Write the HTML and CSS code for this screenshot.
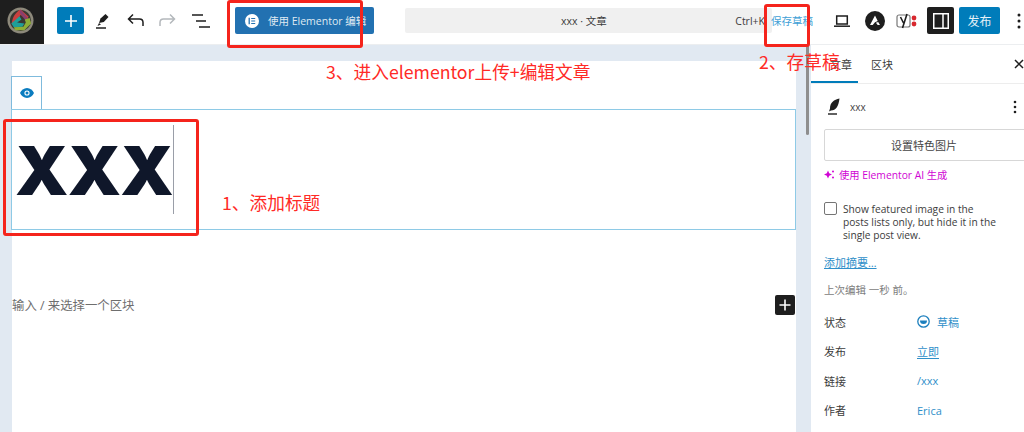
FILE: index.html
```html
<!DOCTYPE html>
<html lang="zh">
<head>
<meta charset="utf-8">
<title>xxx</title>
<link rel="stylesheet" href="styles.css">
</head>
<body>
<header class="topbar">
  <div class="logo">
    <svg width="27" height="27" viewBox="0 0 28 28">
      <circle cx="14" cy="14" r="13.500" fill="#8d897b"/>
      <circle cx="14" cy="14" r="11" fill="#3a3833"/>
      <path d="M14 2.500L22.500 10 20 13 14 8 9.500 17 5 18C5 12 8 6 14 2.500z" fill="#c9403f"/>
      <path d="M14 2.500L24.500 15 21 16 13 6z" fill="#8a3f6e"/>
      <path d="M4.500 17L13 9.500 15 13 10.500 16 18 17 16 20.500 7 21z" fill="#1f9f98"/>
      <path d="M23.500 11.500L25 17 18 24H8.500L7 21 17 20.500 19.500 16 18.500 13z" fill="#8eae36"/>
    </svg>
  </div>
  <div class="tools">
    <button class="btn-add" aria-label="add"><svg width="14" height="14" viewBox="0 0 14 14"><path d="M7 1v12M1 7h12" stroke="#fff" stroke-width="1.600"/></svg></button>
    <svg class="tool" width="20" height="20" viewBox="0 0 20 20"><path d="M7 12l1.500-4.500L13.500 3l3 3-4.700 5z" fill="#1e1e1e"/><path d="M4 17h10" stroke="#1e1e1e" stroke-width="1.500"/><path d="M7 12l-1.500 3 3.500-1.500z" fill="#1e1e1e"/></svg>
    <svg class="tool" width="20" height="20" viewBox="0 0 20 20"><path d="M18 15v-3.500c0-2-1.500-3.500-3.500-3.500H4M8 3.500L3.500 8 8 12.500" fill="none" stroke="#1e1e1e" stroke-width="1.500"/></svg>
    <svg class="tool" width="20" height="20" viewBox="0 0 20 20"><path d="M2 15v-3.500C2 9.500 3.500 8 5.500 8H16M12 3.500L16.500 8 12 12.500" fill="none" stroke="#b4b8bc" stroke-width="1.500"/></svg>
    <svg class="tool" width="20" height="20" viewBox="0 0 20 20"><path d="M1 4h11M5 10h10M8 16h11" fill="none" stroke="#1e1e1e" stroke-width="1.600"/></svg>
  </div>
  <button class="btn-elementor">
    <span class="e-icon"><svg width="10" height="10" viewBox="0 0 10 10"><path d="M1.500 1v8" stroke="#2271b1" stroke-width="1.600"/><path d="M4 1.800h5M4 5h5M4 8.200h5" stroke="#2271b1" stroke-width="1.400"/></svg></span>
    使用 Elementor 编辑
  </button>
  <div class="search">
    <span class="search-title">xxx · 文章</span>
    <span class="search-key">Ctrl+K</span>
  </div>
  <a class="save">保存草稿</a>
  <div class="actions">
    <svg width="20" height="20" viewBox="0 0 20 20"><path d="M4.700 5h10.600v8H4.700z" fill="none" stroke="#1e1e1e" stroke-width="1.500"/><path d="M2 15.200h16" stroke="#1e1e1e" stroke-width="1.500"/></svg>
    <svg width="20" height="20" viewBox="0 0 22 22"><circle cx="11" cy="11" r="11" fill="#1e1e1e"/><path d="M5.500 15.500L11 5l3 6-3 1.500-2.500 3zM12 13l2.500-1 2 3.500h-2.500z" fill="#fff"/></svg>
    <svg class="yoast" width="24" height="20" viewBox="0 0 24 20"><rect x="1" y="4" width="13" height="12" rx="2" fill="#fff" stroke="#777" stroke-width="1.200"/><path d="M4.500 6l3 6M11 3l-4.500 14" fill="none" stroke="#1e1e1e" stroke-width="1.600"/><circle cx="18" cy="7" r="2.400" fill="#d8282f"/><circle cx="18" cy="13" r="2.400" fill="#d8282f"/></svg>
    <button class="btn-panel" aria-label="panel"><svg width="18" height="18" viewBox="0 0 18 18"><path d="M1.750 1.750h14.500v14.500H1.750zM11 2v14" fill="none" stroke="#fff" stroke-width="1.500"/></svg></button>
    <button class="btn-publish">发布</button>
    <svg width="4" height="16" viewBox="0 0 4 16"><circle cx="2" cy="2" r="1.500" fill="#1e1e1e"/><circle cx="2" cy="8" r="1.500" fill="#1e1e1e"/><circle cx="2" cy="14" r="1.500" fill="#1e1e1e"/></svg>
  </div>
</header>

<div class="main">
  <main class="canvas">
    <div class="sheet">
      <div class="block-tab"><svg width="14" height="10" viewBox="0 0 14 10"><path d="M7 0C3.800 0 1.300 2.200 0 5c1.300 2.800 3.800 5 7 5s5.700-2.200 7-5c-1.300-2.800-3.800-5-7-5z" fill="#0b7cbf"/><circle cx="7" cy="5" r="2.600" fill="#fff"/><circle cx="7" cy="5" r="1.500" fill="#0b7cbf"/></svg></div>
      <div class="title-box"><h1 class="title">XXX</h1><span class="caret"></span></div>
      <div class="placeholder-row">
        <span class="placeholder">输入 / 来选择一个区块</span>
        <button class="btn-insert" aria-label="insert"><svg width="12" height="12" viewBox="0 0 12 12"><path d="M6 .5v11M.5 6h11" stroke="#fff" stroke-width="1.600"/></svg></button>
      </div>
    </div>
    <div class="scrollbar"></div>
  </main>
  <aside class="sidebar">
    <div class="tabs">
      <span class="tab active">文章</span>
      <span class="tab">区块</span>
      <svg class="close" width="12" height="12" viewBox="0 0 12 12"><path d="M2 2l8 8M10 2l-8 8" stroke="#1e1e1e" stroke-width="1.500"/></svg>
    </div>
    <div class="panel">
      <div class="post-head">
        <svg width="14" height="18" viewBox="0 0 14 17"><path d="M12.500 0C7 1 3 4 3 10l-1 3 2-1c5 0 7.500-4 8.500-12z" fill="#1e1e1e"/><path d="M1 15.500h9" stroke="#1e1e1e" stroke-width="1.400"/></svg>
        <span class="post-name">xxx</span>
        <svg class="dots" width="4" height="14" viewBox="0 0 4 14"><circle cx="2" cy="2" r="1.300" fill="#1e1e1e"/><circle cx="2" cy="7" r="1.300" fill="#1e1e1e"/><circle cx="2" cy="12" r="1.300" fill="#1e1e1e"/></svg>
      </div>
      <button class="btn-feature">设置特色图片</button>
      <div class="ai"><svg width="11" height="11" viewBox="0 0 11 11"><path d="M4 1.500l1.200 2.800L8 5.500 5.200 6.700 4 9.500 2.800 6.700 0 5.500l2.800-1.200z" fill="#d004d4"/><circle cx="9" cy="2.500" r="1" fill="#d004d4"/><circle cx="9" cy="8.500" r="1" fill="#d004d4"/></svg>使用 Elementor AI 生成</div>
      <label class="check">
        <span class="box"></span>
        <span class="check-text">Show featured image in the posts lists only, but hide it in the single post view.</span>
      </label>
      <a class="excerpt">添加摘要…</a>
      <p class="edited">上次编辑 一秒 前。</p>
      <dl class="meta">
        <div class="row"><dt>状态</dt><dd><svg width="13" height="13" viewBox="0 0 13 13"><circle cx="6.500" cy="6.500" r="5.700" fill="none" stroke="#1c7fbd" stroke-width="1.300"/><path d="M3 5.500h7a3.500 3.500 0 0 1-7 0z" fill="#1c7fbd"/></svg><span class="draft">草稿</span></dd></div>
        <div class="row"><dt>发布</dt><dd class="u">立即</dd></div>
        <div class="row"><dt>链接</dt><dd>/xxx</dd></div>
        <div class="row"><dt>作者</dt><dd>Erica</dd></div>
      </dl>
    </div>
  </aside>
</div>

<div class="anno-box box-1"></div>
<div class="anno-box box-2"></div>
<div class="anno-box box-3"></div>
<div class="anno note-1">1、添加标题</div>
<div class="anno note-2">2、存草稿</div>
<div class="anno note-3">3、进入elementor上传+编辑文章</div>
</body>
</html>
```
FILE: styles.css
```css
* { box-sizing: border-box; }
html, body { margin: 0; height: 432px; overflow: hidden; }
body {
  position: relative;
  width: 1024px;
  background: #fff;
  color: #1e1e1e;
  font-family: "Open Sans", "Noto Sans CJK SC", sans-serif;
  font-size: 12px;
  display: flex;
  flex-direction: column;
}
button { border: 0; padding: 0; font: inherit; cursor: pointer; }

.topbar {
  height: 45px;
  flex: none;
  display: flex;
  align-items: center;
  background: #fff;
  border-bottom: 1px solid #eceef0;
  padding-bottom: 3px;
}
.logo {
  width: 44px;
  align-self: stretch;
  margin-bottom: -3px;
  background: #1e1e1e;
  display: flex;
  align-items: center;
  padding: 0 0 3px 7px;
  flex: none;
}
.tools { display: flex; align-items: center; margin-left: 13px; width: 178px; flex: none; }
.btn-add {
  width: 27px;
  height: 27px;
  border-radius: 2px;
  background: #007cba;
  display: flex;
  align-items: center;
  justify-content: center;
  margin-right: 8px;
}
.tool { margin-right: 13px; }
.btn-elementor {
  width: 139px;
  height: 27px;
  flex: none;
  display: flex;
  align-items: center;
  gap: 9px;
  padding-left: 10px;
  border-radius: 2px;
  background: #2271b1;
  color: #dfe9f2;
  font-size: 10.500px;
  white-space: nowrap;
}
.e-icon {
  width: 14px;
  height: 14px;
  border-radius: 50%;
  background: #fff;
  display: flex;
  align-items: center;
  justify-content: center;
}
.e-icon svg { width: 8px; height: 8px; }
.search {
  margin-left: 31px;
  width: 367px;
  height: 25px;
  flex: none;
  border-radius: 2px;
  background: #f0f0f0;
  display: flex;
  align-items: center;
  padding-left: 156px;
  font-size: 10.500px;
  color: #3c3c3c;
}
.search-key { margin-left: auto; margin-right: 7px; }
.search-title { white-space: nowrap; }
.save {
  margin-left: -1px;
  width: 44px;
  flex: none;
  color: #3f9fd6;
  font-size: 10.500px;
  white-space: nowrap;
}
.actions { display: flex; align-items: center; flex: none; }
.actions > :nth-child(1) { margin-left: 17px; }
.actions > :nth-child(2) { margin-left: 13px; }
.actions > :nth-child(3) { margin-left: 11px; }
.btn-panel {
  margin-left: 7px;
  width: 27px;
  height: 27px;
  border-radius: 2px;
  background: #1e1e1e;
  display: flex;
  align-items: center;
  justify-content: center;
}
.btn-publish {
  margin-left: 5px;
  width: 41px;
  height: 27px;
  border-radius: 2px;
  background: #007cba;
  color: #e6f1f7;
  font-size: 12px;
}
.actions > :last-child { margin-left: 17px; }

.main { flex: 1; display: flex; min-height: 0; }
.canvas {
  width: 811px;
  flex: none;
  display: flex;
  padding: 16px 0 0 12px;
  background: #e1e9f2;
  position: relative;
}
.sheet {
  width: 784px;
  background: #fff;
  padding-top: 15px;
  display: flex;
  flex-direction: column;
  flex: none;
}
.block-tab {
  width: 31px;
  height: 33px;
  margin-left: -1px;
  border: 1px solid #7fbbdd;
  border-bottom: 0;
  display: flex;
  align-items: center;
  justify-content: center;
  flex: none;
}
.title-box {
  height: 121px;
  margin-left: -1px;
  margin-right: 0;
  border: 1px solid #8ecae6;
  display: flex;
  align-items: center;
  padding-left: 3px;
  flex: none;
}
.title {
  margin: 0;
  font-family: "Inter", sans-serif;
  font-weight: 900;
  font-size: 68px;
  line-height: 1;
  color: #0f172a;
  letter-spacing: -0.800px;
}
.caret { width: 1px; height: 89px; background: #9a9ea8; margin-left: 0; }
.placeholder-row {
  margin-top: 64px;
  height: 21px;
  display: flex;
  align-items: center;
  justify-content: space-between;
  padding-right: 1px;
}
.placeholder { font-size: 12.400px; color: #6e6e6e; }
.btn-insert {
  width: 20px;
  height: 20px;
  border-radius: 2px;
  background: #1e1e1e;
  display: flex;
  align-items: center;
  justify-content: center;
}
.scrollbar {
  position: absolute;
  top: 0;
  right: 2px;
  width: 3px;
  height: 90px;
  background: #8e8e8e;
  border-radius: 2px;
}

.sidebar {
  flex: 1;
  min-width: 0;
  background: #fff;
  display: flex;
  flex-direction: column;
  overflow: hidden;
}
.tabs {
  height: 39px;
  flex: none;
  display: flex;
  align-items: center;
  border-bottom: 1px solid #ededed;
  font-size: 11px;
}
.tab { height: 100%; display: flex; align-items: center; color: #3c3c3c; }
.tab.active { box-shadow: inset 0 -2px 0 #007cba; padding-left: 19px; width: 47px; }
.tab + .tab { margin-left: 13px; }
.close { margin-left: auto; margin-right: -1px; }
.panel { padding: 0 0 0 13px; }
.post-head { height: 24px; margin-top: 11px; display: flex; align-items: center; width: 200px; padding-left: 3px; }
.post-name { margin-left: 9px; font-size: 10px; color: #444; }
.dots { margin-left: auto; margin-right: 7px; }
.btn-feature {
  display: block;
  margin-top: 10px;
  width: 215px;
  height: 32px;
  border: 1px solid #d7d7d7;
  border-radius: 2px;
  background: #fff;
  color: #444;
  font-size: 11px;
  text-align: center;
  padding-right: 15px;
}
.ai {
  margin-top: 6px;
  display: flex;
  align-items: center;
  gap: 4px;
  color: #d004d4;
  font-size: 10.300px;
  height: 15px;
}
.check { margin-top: 20px; display: flex; gap: 6px; width: 173px; }
.box {
  width: 13px;
  height: 13px;
  flex: none;
  border: 1px solid #757575;
  border-radius: 2px;
  background: #fff;
}
.check-text { font-size: 10.200px; line-height: 13px; color: #3c3c3c; margin-top: 1px; }
.excerpt {
  display: block;
  margin-top: 12px;
  color: #2f8fc9;
  text-decoration: underline;
  font-size: 11px;
}
.edited { margin: 12px 0 0; color: #7c7c7c; font-size: 10.500px; }
.meta { margin: 10px 0 0; }
.row { display: flex; align-items: center; height: 29.500px; }
dt { width: 93px; font-size: 11px; color: #3c3c3c; }
dd { margin: 0; display: flex; align-items: center; color: #2f8fc9; font-size: 11px; }
dd.u { text-decoration: underline; text-underline-offset: 2px; }
.draft { margin-left: 7px; }

.anno-box {
  position: absolute;
  border: 3px solid #f5241c;
  border-radius: 3px;
  pointer-events: none;
}
.box-1 { left: 3px; top: 119px; width: 196px; height: 117px; }
.box-2 { left: 764px; top: 4px; width: 46px; height: 43px; }
.box-3 { left: 227px; top: 0; width: 136px; height: 48px; }
.anno {
  position: absolute;
  color: #ff2a26;
  font-family: "Noto Sans CJK SC", sans-serif;
  font-size: 17.700px;
  line-height: 24px;
  white-space: nowrap;
}
.note-1 { left: 222px; top: 190px; }
.note-2 { left: 759px; top: 49px; }
.note-3 { left: 326px; top: 59px; }
```
